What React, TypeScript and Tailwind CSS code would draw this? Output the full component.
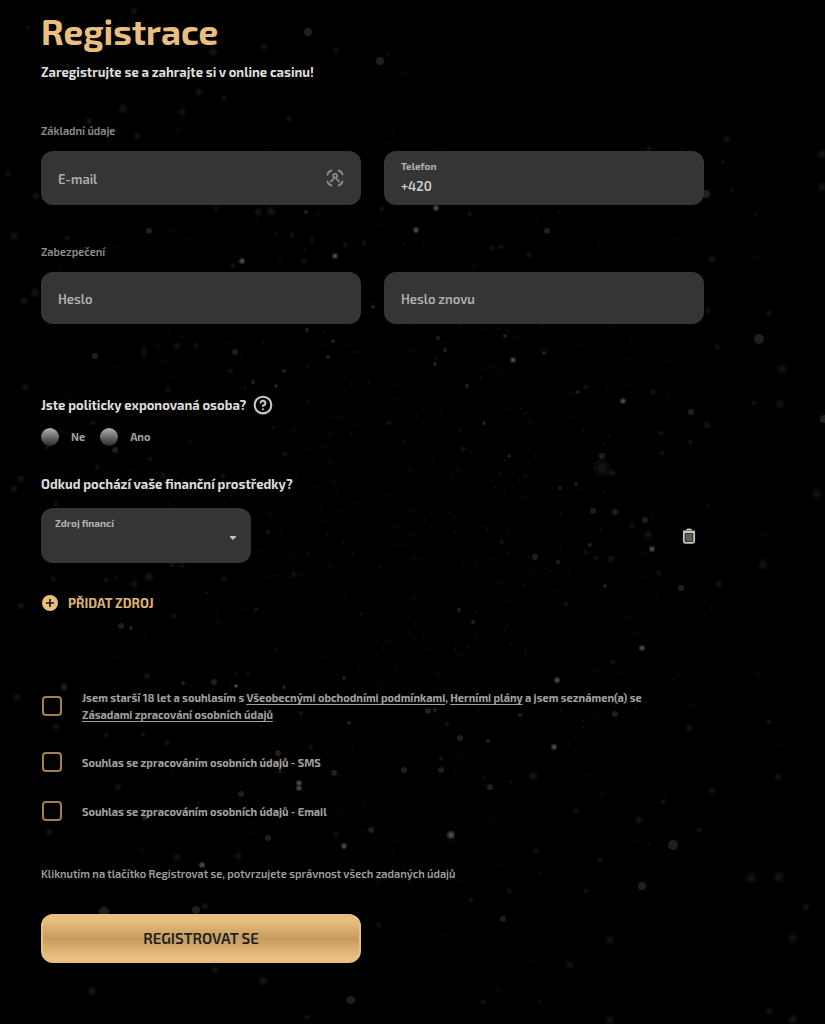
import { useState } from "react";
import type { ReactNode } from "react";
import { CircleQuestionMark } from "lucide-react";

type Speck = [x: number, y: number, r: number];

const BRIGHT: Speck[] = [
  [436, 208, 3], [416, 230, 3], [242, 261, 3], [335, 256, 3], [513, 360, 3], [623, 401, 3], [642, 648, 3],
  [557, 680, 3], [236, 686, 2], [299, 783, 3], [299, 788, 3], [451, 835, 4], [344, 846, 3], [202, 865, 3],
  [554, 747, 3], [652, 549, 3],
];

const DIM: Speck[] = [
  [308, 32, 4], [380, 61, 4], [706, 194, 4], [547, 231, 3], [306, 212, 2], [149, 231, 3], [759, 339, 5],
  [95, 356, 3], [235, 352, 3], [307, 330, 2], [333, 341, 2], [328, 357, 2], [284, 371, 2], [253, 382, 2],
  [276, 386, 2], [373, 307, 2], [438, 338, 2], [445, 350, 2], [435, 364, 2], [505, 336, 2], [544, 353, 2],
  [467, 386, 2], [578, 392, 2], [691, 412, 3], [824, 419, 4], [484, 423, 2], [509, 456, 2], [602, 456, 3],
  [576, 484, 2], [560, 488, 2], [593, 511, 3], [615, 512, 3], [645, 520, 3], [590, 545, 2], [535, 557, 3],
  [558, 562, 2], [681, 588, 3], [459, 610, 2], [473, 622, 2], [605, 586, 2], [115, 450, 3], [121, 626, 3],
  [131, 628, 2], [183, 683, 2], [214, 682, 3], [284, 687, 2], [344, 678, 2], [64, 687, 3], [349, 723, 2],
  [278, 753, 3], [280, 771, 2], [334, 773, 3], [241, 794, 3], [404, 770, 3], [371, 830, 3], [268, 838, 3],
  [428, 711, 3], [435, 710, 2], [460, 738, 3], [488, 741, 2], [441, 770, 3], [490, 787, 3], [673, 845, 5],
  [642, 886, 4], [503, 919, 3], [104, 912, 5], [196, 910, 4], [520, 715, 2], [615, 714, 3], [351, 1000, 4],
  [145, 817, 3],
];

const FAINT: Speck[] = [
  [134, 11, 4], [264, 47, 4], [213, 52, 5], [336, 50, 3], [199, 92, 4], [224, 97, 3], [123, 109, 5],
  [182, 112, 4], [89, 121, 4], [137, 136, 4], [289, 119, 3], [36, 196, 4], [8, 174, 3], [271, 211, 5],
  [258, 212, 4], [216, 208, 3], [382, 209, 3], [68, 66, 3], [28, 27, 2], [727, 139, 4], [822, 154, 5],
  [822, 187, 5], [470, 214, 3], [492, 248, 3], [501, 247, 3], [529, 255, 3], [712, 259, 4], [769, 313, 3],
  [649, 149, 3], [723, 162, 2], [732, 190, 2], [708, 311, 3], [755, 215, 2], [14, 236, 5], [67, 238, 3],
  [233, 266, 3], [304, 261, 3], [292, 235, 3], [312, 240, 3], [345, 245, 3], [364, 243, 3], [35, 293, 5],
  [24, 301, 4], [144, 352, 4], [177, 346, 4], [196, 345, 3], [231, 371, 3], [307, 367, 2], [355, 352, 2],
  [25, 387, 4], [168, 390, 3], [389, 423, 3], [285, 454, 3], [93, 423, 3], [47, 447, 3], [190, 442, 2],
  [273, 427, 2], [150, 459, 3], [21, 479, 4], [14, 489, 4], [56, 504, 3], [134, 584, 4], [149, 577, 5],
  [53, 579, 3], [106, 580, 3], [21, 606, 4], [174, 616, 3], [207, 593, 2], [224, 579, 3], [294, 574, 3],
  [256, 609, 3], [361, 614, 2], [172, 565, 3], [182, 566, 3], [268, 532, 3], [97, 467, 3], [223, 476, 3],
  [163, 475, 4], [17, 697, 4], [147, 676, 4], [248, 674, 2], [56, 727, 4], [106, 735, 3], [143, 734, 3],
  [167, 743, 3], [301, 713, 3], [311, 747, 3], [118, 787, 4], [49, 832, 4], [336, 834, 3], [533, 776, 5],
  [511, 782, 2], [689, 728, 4], [769, 722, 3], [778, 777, 4], [712, 791, 4], [663, 802, 3], [639, 820, 4],
  [576, 811, 3], [699, 830, 3], [536, 851, 3], [600, 860, 3], [751, 878, 6], [779, 877, 6], [806, 907, 4],
  [793, 938, 5], [509, 891, 3], [471, 900, 3], [610, 940, 5], [570, 965, 4], [586, 891, 3], [483, 1002, 3],
  [769, 1011, 4], [793, 1019, 5], [610, 1020, 5], [539, 1001, 2], [447, 724, 3], [441, 758, 3],
  [238, 856, 4], [177, 857, 4], [205, 906, 4], [92, 991, 5], [215, 970, 4], [263, 981, 5], [379, 925, 3],
  [307, 1017, 3], [586, 387, 3], [782, 369, 5], [780, 404, 5], [754, 403, 3], [707, 425, 4], [690, 442, 3],
  [661, 433, 3], [463, 449, 3], [602, 468, 9], [612, 473, 4], [648, 535, 5], [632, 526, 3], [585, 552, 3],
  [596, 558, 3], [611, 559, 4], [817, 494, 5], [763, 565, 5], [719, 584, 4], [659, 573, 3], [717, 347, 3],
  [502, 542, 3], [613, 662, 3], [566, 604, 3], [662, 453, 3], [653, 392, 3],
];

// tiny grains, denser around the middle of the page
function makeGrains(count: number): Speck[] {
  let seed = 7;
  const next = () => {
    seed = (seed * 16807) % 2147483647;
    return seed / 2147483647;
  };
  return Array.from({ length: count }, () => [
    Math.round(410 + (next() + next() + next() - 1.5) * 300),
    Math.round(510 + (next() + next() + next() - 1.5) * 370),
    1,
  ]);
}

const GRAINS = makeGrains(380);

function Dust() {
  return (
    <svg className="pointer-events-none absolute inset-0 h-full w-full" aria-hidden="true">
      <g fill="#14120f">
        {GRAINS.map(([x, y, r], i) => <circle key={i} cx={x} cy={y} r={r} />)}
      </g>
      {FAINT.map(([x, y, r], i) => (
        <g key={i} fill="#1f1b16">
          <circle cx={x} cy={y} r={r} opacity={0.35} />
          <circle cx={x} cy={y} r={r / 2} opacity={0.5} />
        </g>
      ))}
      <g fill="#231e19">
        {DIM.map(([x, y, r], i) => <circle key={i} cx={x} cy={y} r={r} />)}
      </g>
      {BRIGHT.map(([x, y, r], i) => (
        <g key={i}>
          <circle cx={x} cy={y} r={r} fill="#2e2b28" />
          <circle cx={x} cy={y} r={r / 2} fill="#544c46" />
        </g>
      ))}
    </svg>
  );
}

function ScanUserIcon() {
  return (
    <svg className="h-[18px] w-[18px] shrink-0" viewBox="0 0 18 18" fill="none" stroke="#8f8a84" strokeWidth="1.8" strokeLinecap="round" aria-hidden="true">
      <path d="M1.5 5.5C2 3.4 3.4 2 5.5 1.5M12.5 1.5c2.1.5 3.5 1.9 4 4M16.5 12.5c-.5 2.1-1.9 3.5-4 4M5.5 16.5c-2.1-.5-3.5-1.9-4-4" />
      <circle cx="9" cy="6.8" r="2" />
      <path d="M8 8.8C7.5 10.5 6 11.5 4.8 12.5M10 8.8c.5 1.7 2 2.7 3.2 3.7" />
    </svg>
  );
}

function TrashIcon() {
  return (
    <svg className="h-4 w-3.5" viewBox="0 0 14 16" fill="none" aria-hidden="true">
      <path d="M4.5 2.2C5 1.4 6 1.2 7 1.2s2 .2 2.5 1" stroke="#c4c4c0" strokeWidth="1.6" />
      <path d="M1.8 3.4h10.4" stroke="#c4c4c0" strokeWidth="2" strokeLinecap="round" />
      <rect x="1.8" y="4" width="10.4" height="10.8" rx="1.5" fill="#3a3733" stroke="#c4c4c0" strokeWidth="1.8" />
      <path d="M5 6v7M7 6v7M9 6v7" stroke="#8a8680" strokeWidth="1" />
    </svg>
  );
}

function PlusCircleIcon() {
  return (
    <svg className="ml-px h-4 w-4" viewBox="0 0 16 16" aria-hidden="true">
      <circle cx="8" cy="8" r="8" fill="#e9bf7f" />
      <path d="M8 4v8M4 8h8" stroke="#1c1610" strokeWidth="1.6" />
    </svg>
  );
}

const fieldBox = "flex min-w-0 items-center rounded-xl bg-[#353535] px-[17px]";
const fieldInput = "w-full min-w-0 bg-transparent text-[13px] font-semibold text-[#d0d0cc] outline-none placeholder:text-[#b3b1ac] placeholder:opacity-100";

function Consent({ id, children }: { id: string; children: ReactNode }) {
  return (
    <div className="flex items-center gap-5">
      <input
        id={id}
        type="checkbox"
        className="ml-px h-5 w-5 shrink-0 appearance-none rounded-[4px] border-2 border-[#a47d4c] bg-black checked:bg-[#e9bf7f]"
      />
      <label htmlFor={id} className="max-w-[580px] text-[11px] leading-[17px] font-bold text-[#a3a09c]">
        {children}
      </label>
    </div>
  );
}

export default function App() {
  const [phone, setPhone] = useState("+420");
  const [pep, setPep] = useState("");

  return (
    <div className="relative min-h-screen bg-black px-[41px] pt-3 pb-[61px] font-['Exo_2',Roboto,sans-serif]">
      <Dust />
      <form className="relative flex max-w-[663px] flex-col" onSubmit={(e) => e.preventDefault()}>
        <h1 className="text-[35px] leading-[38px] font-bold text-[#e9bf7f]">Registrace</h1>
        <p className="mt-3 text-[13px] leading-5 font-bold text-[#dcdcd8]">
          Zaregistrujte se a zahrajte si v online casinu!
        </p>

        {/* Basic info */}
        <h2 className="mt-[41px] text-[11px] leading-4 font-semibold text-[#92908c]">Základní údaje</h2>
        <div className="mt-3 grid h-[54px] grid-cols-2 gap-[23px]">
          <div className={fieldBox}>
            <input type="email" aria-label="E-mail" placeholder="E-mail" className={`${fieldInput} pt-1`} />
            <ScanUserIcon />
          </div>
          <div className={fieldBox}>
            <div className="flex w-full flex-col">
              <label htmlFor="phone" className="text-[10px] leading-4 font-bold text-[#b3b1ac]">Telefon</label>
              <input
                id="phone"
                type="tel"
                value={phone}
                onChange={(e) => setPhone(e.target.value)}
                className={`${fieldInput} h-6`}
              />
            </div>
          </div>
        </div>

        {/* Security */}
        <h2 className="mt-[39px] text-[11px] leading-4 font-semibold text-[#92908c]">Zabezpečení</h2>
        <div className="mt-3 grid h-[52px] grid-cols-2 gap-[23px]">
          <div className={fieldBox}>
            <input type="password" aria-label="Heslo" placeholder="Heslo" className={`${fieldInput} pt-1`} />
          </div>
          <div className={fieldBox}>
            <input type="password" aria-label="Heslo znovu" placeholder="Heslo znovu" className={`${fieldInput} pt-1`} />
          </div>
        </div>

        {/* Politically exposed person */}
        <fieldset className="mt-[71px]">
          <legend className="flex items-center gap-[7px] text-[13px] leading-5 font-bold text-[#dcdcd8]">
            Jste politicky exponovaná osoba?
            <button type="button" aria-label="Nápověda">
              <CircleQuestionMark className="h-5 w-5 text-[#c8c8c4]" strokeWidth={2.5} />
            </button>
          </legend>
          <div className="mt-3 flex gap-[15px]">
            {["Ne", "Ano"].map((option) => (
              <label key={option} className="flex items-center gap-3 text-[11px] leading-5 font-bold text-[#a3a09c]">
                <input
                  type="radio"
                  name="pep"
                  value={option}
                  checked={pep === option}
                  onChange={() => setPep(option)}
                  className="h-[18px] w-[18px] appearance-none rounded-full bg-linear-to-b from-[#b4b4b2] to-[#2c2b2a] checked:from-[#e9bf7f]"
                />
                {option}
              </label>
            ))}
          </div>
        </fieldset>

        {/* Source of funds */}
        <h2 className="mt-[27px] text-[13px] leading-5 font-bold text-[#dcdcd8]">
          Odkud pochází vaše finanční prostředky?
        </h2>
        <div className="mt-3.5 flex items-center justify-between">
          <div className="relative flex h-[55px] w-[210px] flex-col rounded-xl bg-[#353535] pt-[7px]">
            <label htmlFor="source" className="px-3.5 text-[10px] leading-4 font-bold text-[#b3b1ac]">Zdroj financí</label>
            <select
              id="source"
              defaultValue=""
              className="w-full flex-1 appearance-none bg-transparent px-3.5 text-[13px] text-[#d0d0cc] outline-none"
            >
              <option value="" />
            </select>
            <svg className="pointer-events-none absolute top-1/2 right-[15px] h-1 w-1.5" viewBox="0 0 6 4" aria-hidden="true">
              <path d="M0 0h6v1L3 4 0 1z" fill="#c4c4c0" />
            </svg>
          </div>
          <button type="button" aria-label="Smazat zdroj" className="mr-2">
            <TrashIcon />
          </button>
        </div>
        <button type="button" className="mt-[30px] flex items-center gap-2.5 self-start text-[13px] leading-5 font-bold text-[#dcb172]">
          <PlusCircleIcon />
          PŘIDAT ZDROJ
        </button>

        {/* Consents */}
        <div className="mt-[76px] flex flex-col gap-[29px]">
          <Consent id="terms">
            Jsem starší 18 let a souhlasím s{" "}
            <a href="#" className="underline underline-offset-2">Všeobecnými obchodními podmínkami</a>,{" "}
            <a href="#" className="underline underline-offset-2">Herními plány</a> a jsem seznámen(a) se{" "}
            <a href="#" className="underline underline-offset-2">Zásadami zpracování osobních údajů</a>
          </Consent>
          <Consent id="sms">Souhlas se zpracováním osobních údajů - SMS</Consent>
          <Consent id="mailing">Souhlas se zpracováním osobních údajů - Email</Consent>
        </div>

        <p className="mt-[45px] text-[11px] leading-4 font-semibold text-[#a3a09c]">
          Kliknutím na tlačítko Registrovat se, potvrzujete správnost všech zadaných údajů
        </p>
        <button
          type="submit"
          className="mt-8 h-[49px] w-[320px] rounded-xl border-2 border-[#e9bf7f] bg-linear-to-b from-[#e9bf7f] from-10% via-[#c69c5e] to-[#e9bf7f] to-90% text-[15px] font-semibold text-[#1d1d1f]"
        >
          REGISTROVAT SE
        </button>
      </form>
    </div>
  );
}
